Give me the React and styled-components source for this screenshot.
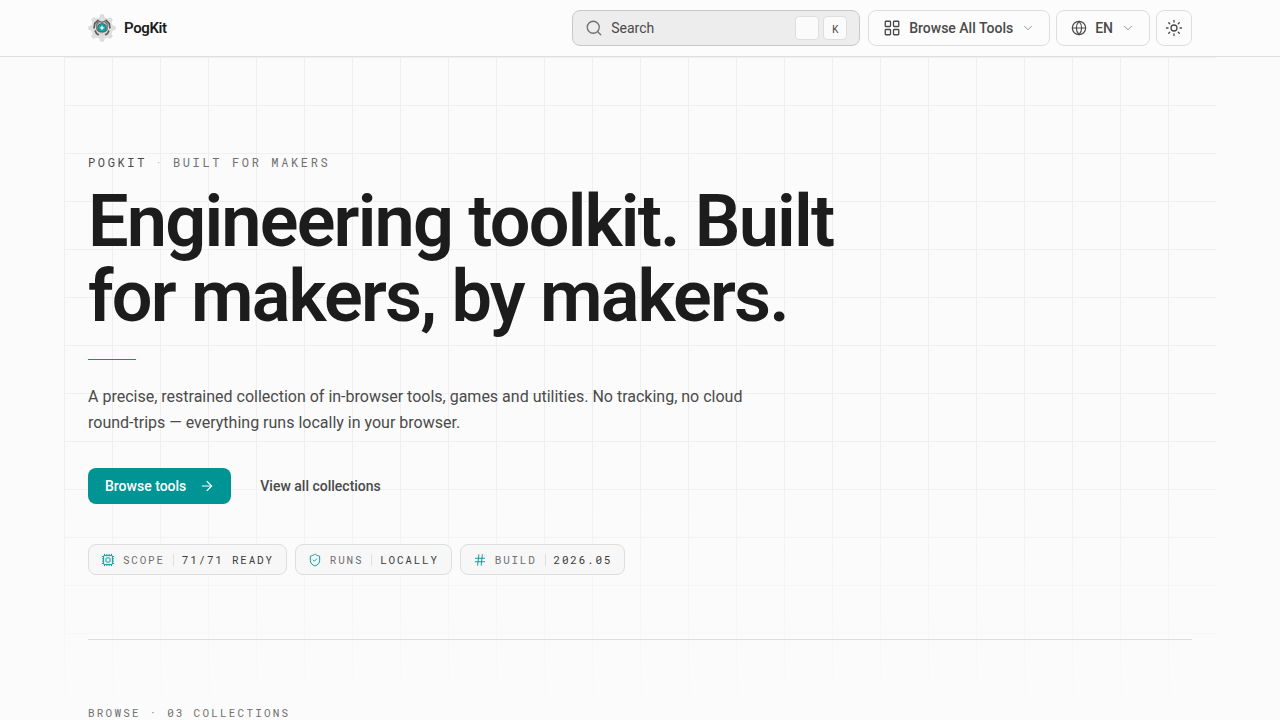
import React from 'react';
import styled, { createGlobalStyle, css } from 'styled-components';
import {
  Search, LayoutGrid, Globe, Sun, ChevronDown, ArrowRight, ShieldCheck, Hash,
} from 'lucide-react';

const color = {
  page: '#fbfbfb',
  surface: '#f7f7f7',
  line: '#dedede',
  grid: '#efefef',
  ink: '#1c1c1c',
  body: '#4a4a4a',
  muted: '#707070',
  accent: '#009494',
};

const mono = css`
  font-family: 'Roboto Mono', 'Liberation Mono', monospace;
`;

const GlobalStyle = createGlobalStyle`
  *, *::before, *::after { box-sizing: border-box; }
  body {
    margin: 0;
    background: ${color.page};
    color: ${color.ink};
    font-family: Roboto, 'Liberation Sans', sans-serif;
    font-size: 14px;
  }
  button, input { font: inherit; color: inherit; }
  h1, h2, p { margin: 0; }
`;

const Header = styled.header`
  border-bottom: 1px solid ${color.line};
  background: #fcfcfc;
`;

const HeaderInner = styled.div`
  display: flex;
  align-items: center;
  justify-content: space-between;
  max-width: 1152px;
  height: 56px;
  margin: 0 auto;
  padding: 0 24px;
`;

const Brand = styled.a`
  display: flex;
  align-items: center;
  gap: 8px;
  color: ${color.ink};
  font-size: 15px;
  font-weight: 600;
  letter-spacing: -0.025em;
  line-height: 18px;
  text-decoration: none;
`;

const Toolbar = styled.div`
  display: flex;
  align-items: center;
  gap: 8px;
`;

const Actions = styled.nav`
  display: flex;
  align-items: center;
  gap: 6px;
`;

const SearchBox = styled.label`
  display: flex;
  align-items: center;
  gap: 8px;
  width: 288px;
  height: 36px;
  padding: 0 12px;
  border: 1px solid #c8c8c8;
  border-radius: 8px;
  background: #ededed;
  color: ${color.muted};
`;

const SearchInput = styled.input`
  flex: 1;
  min-width: 0;
  padding: 0;
  border: 0;
  outline: 0;
  background: transparent;
  color: ${color.body};
  &::placeholder { color: ${color.body}; opacity: 1; }
`;

const Keys = styled.span`
  display: flex;
  gap: 4px;
`;

const Key = styled.kbd`
  ${mono}
  display: grid;
  place-items: center;
  width: 24px;
  height: 24px;
  border: 1px solid ${color.line};
  border-radius: 4px;
  background: ${color.page};
  color: ${color.body};
  font-size: 11px;
`;

const OutlineButton = styled.button`
  display: flex;
  align-items: center;
  justify-content: center;
  gap: 8px;
  height: 36px;
  min-width: 36px;
  padding: ${(p) => (p.$square ? '0' : '0 14px')};
  border: 1px solid ${color.line};
  border-radius: 8px;
  background: transparent;
  color: ${color.body};
  font-weight: 500;
  white-space: nowrap;
  cursor: pointer;
`;

const Chevron = styled(ChevronDown).attrs({ size: 14, strokeWidth: 1.25 })`
  color: ${color.muted};
`;

const Main = styled.main`
  max-width: 1152px;
  margin: 0 auto;
  padding: 0 24px;
  background-image:
    linear-gradient(to bottom, transparent 400px, ${color.page} 660px),
    linear-gradient(to right, ${color.grid} 1px, transparent 1px),
    linear-gradient(to bottom, ${color.grid} 1px, transparent 1px);
  background-size: auto, 48px 48px, 48px 48px;
`;

const Hero = styled.section`
  padding: 96px 0 64px;
  border-bottom: 1px solid ${color.line};
`;

const Eyebrow = styled.p`
  ${mono}
  display: flex;
  gap: 8px;
  color: ${color.muted};
  font-size: 12px;
  line-height: 18px;
  letter-spacing: 0.22em;
  text-transform: uppercase;
`;

const EyebrowName = styled.span`
  color: ${color.body};
`;

const EyebrowDot = styled.span`
  color: #b8b8b8;
`;

const Title = styled.h1`
  max-width: 768px;
  margin-top: 13px;
  font-size: 72px;
  font-weight: 600;
  line-height: 75px;
  letter-spacing: -0.025em;
`;

const Rule = styled.div`
  width: 48px;
  height: 1px;
  margin: 25px 0 24px;
  background: ${color.accent};
`;

const Lead = styled.p`
  max-width: 672px;
  color: ${color.body};
  font-size: 16px;
  line-height: 26px;
`;

const ButtonRow = styled.div`
  display: flex;
  gap: 12px;
  margin-top: 32px;
`;

const ActionLink = styled.a`
  display: flex;
  align-items: center;
  justify-content: space-between;
  gap: 13px;
  height: 36px;
  padding: ${(p) => (p.$primary ? '0 16px 0 17px' : '0 17px')};
  border-radius: 8px;
  background: ${(p) => (p.$primary ? color.accent : 'transparent')};
  color: ${(p) => (p.$primary ? '#fff' : color.body)};
  font-weight: 500;
  text-decoration: none;
`;

const Chips = styled.div`
  display: flex;
  flex-wrap: wrap;
  gap: 8px;
  margin-top: 40px;
`;

const ChipBox = styled.div`
  ${mono}
  display: flex;
  align-items: center;
  gap: 8px;
  height: 31px;
  padding: 0 12px;
  border: 1px solid ${color.line};
  border-radius: 8px;
  background: ${color.surface};
  color: ${color.muted};
  font-size: 11px;
  letter-spacing: 0.16em;
  text-transform: uppercase;
  svg { color: ${color.accent}; }
`;

const ChipDivider = styled.span`
  width: 1px;
  height: 12px;
  background: ${color.line};
`;

const ChipValue = styled.span`
  color: #3c3c3c;
`;

const Collections = styled.section`
  padding: 64px 0;
`;

const SectionLabel = styled.h2`
  ${mono}
  color: ${color.muted};
  font-size: 11px;
  font-weight: 400;
  line-height: 18px;
  letter-spacing: 0.2em;
  text-transform: uppercase;
`;

const spokes = [0, 45, 90, 135, 180, 225, 270, 315];

function Logo() {
  return (
    <svg width="28" height="28" viewBox="0 0 28 28" aria-hidden="true">
      {spokes.map((a) => (
        <path key={a} d="M10.500 4.800 L12 3 L12.600 0.800 H15.400 L16 3 L17.500 4.800Z" fill="#dedede" stroke="#c8c8c8" strokeWidth="0.5" transform={`rotate(${a} 14 14)`} />
      ))}
      <circle cx="14" cy="14" r="10.800" fill="#e0e0e0" />
      <path d="M6 14.500 L6.800 9.500 L10.500 5.800 M22 14.500 L21.200 9.500 L17.500 5.800 M7 16.500 L8.500 19.500 L10.800 21 M21 16.500 L19.500 19.500 L17.200 21" fill="none" stroke="#5c5c5c" strokeWidth="1.700" />
      <path d="M8.800 10 L11.500 7.300 L14 8.300 L16.500 7.300 L19.200 10 V15.500 L14 21 L8.800 15.500Z" fill="#c8c8c8" stroke="#6c6c6c" strokeWidth="1.200" />
      <path d="M10.500 17.800 L14 19.500 L17.500 17.800 L14 25.500Z" fill="#dadada" />
      <circle cx="14" cy="13.800" r="4.600" fill="#27595c" />
      <circle cx="14" cy="13.800" r="3.900" fill="#14a3a5" />
      <path d="M14 11.200 L14.900 12.900 L16.600 13.800 L14.900 14.700 L14 16.400 L13.100 14.700 L11.400 13.800 L13.100 12.900Z" fill="#e4ffff" />
    </svg>
  );
}

function Chipset({ size, strokeWidth, ...rest }) {
  return (
    <svg width={size} height={size} viewBox="0 0 24 24" fill="none" stroke="currentColor" strokeWidth={strokeWidth} {...rest}>
      <rect x="4.500" y="4.500" width="15" height="15" rx="1" />
      <rect x="8.500" y="8.500" width="7" height="7" rx="1" />
      <path d="M6 1.500v3M10 1.500v3M14 1.500v3M18 1.500v3M6 19.500v3M10 19.500v3M14 19.500v3M18 19.500v3M1.500 6h3M1.500 10h3M1.500 14h3M1.500 18h3M19.500 6h3M19.500 10h3M19.500 14h3M19.500 18h3" />
    </svg>
  );
}

function Chip({ icon: Icon, label, value }) {
  return (
    <ChipBox>
      <Icon size={14} strokeWidth={1.6} aria-hidden="true" />
      <span>{label}</span>
      <ChipDivider />
      <ChipValue>{value}</ChipValue>
    </ChipBox>
  );
}

export default function App() {
  return (
    <>
      <GlobalStyle />
      <Header>
        <HeaderInner>
          <Brand href="#"><Logo />PogKit</Brand>
          <Toolbar>
            <SearchBox>
              <Search size={18} strokeWidth={1.75} aria-hidden="true" />
              <SearchInput type="search" placeholder="Search" aria-label="Search" />
              <Keys><Key /><Key>K</Key></Keys>
            </SearchBox>
            <Actions>
              <OutlineButton type="button">
                <LayoutGrid size={18} strokeWidth={1.75} />
                Browse All Tools
                <Chevron />
              </OutlineButton>
              <OutlineButton type="button">
                <Globe size={16} strokeWidth={1.75} />
                EN
                <Chevron />
              </OutlineButton>
              <OutlineButton type="button" $square aria-label="Toggle theme">
                <Sun size={18} strokeWidth={1.75} />
              </OutlineButton>
            </Actions>
          </Toolbar>
        </HeaderInner>
      </Header>
      <Main>
        <Hero>
          <Eyebrow>
            <EyebrowName>PogKit</EyebrowName>
            <EyebrowDot>·</EyebrowDot>
            <span>Built for makers</span>
          </Eyebrow>
          <Title>Engineering toolkit. Built for makers, by makers.</Title>
          <Rule />
          <Lead>
            A precise, restrained collection of in-browser tools, games and utilities. No tracking,
            no cloud round-trips — everything runs locally in your browser.
          </Lead>
          <ButtonRow>
            <ActionLink href="#tools" $primary>
              Browse tools
              <ArrowRight size={16} strokeWidth={1.75} aria-hidden="true" />
            </ActionLink>
            <ActionLink href="#collections">View all collections</ActionLink>
          </ButtonRow>
          <Chips>
            <Chip icon={Chipset} label="Scope" value="71/71 ready" />
            <Chip icon={ShieldCheck} label="Runs" value="Locally" />
            <Chip icon={Hash} label="Build" value="2026.05" />
          </Chips>
        </Hero>
        <Collections id="collections">
          <SectionLabel>Browse · 03 collections</SectionLabel>
        </Collections>
      </Main>
    </>
  );
}
